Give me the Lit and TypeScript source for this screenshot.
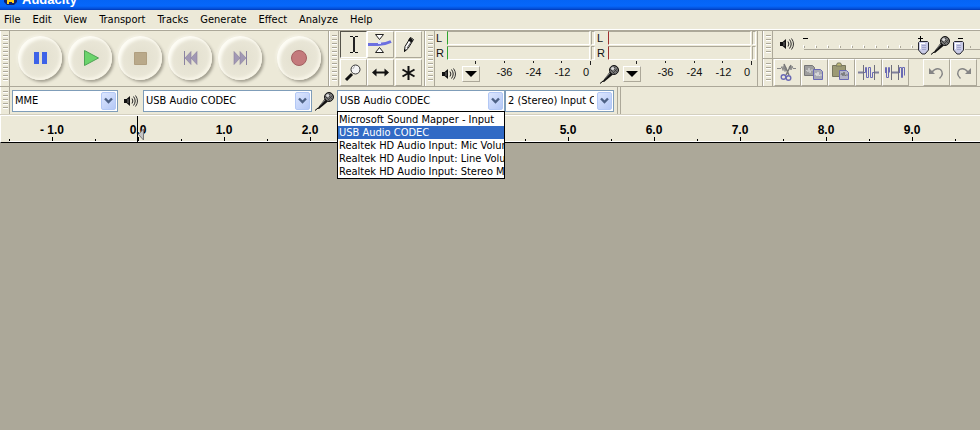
import { LitElement, html, css, svg, nothing } from "lit";
import { customElement, property } from "lit/decorators.js";
import { classMap } from "lit/directives/class-map.js";

const speaker = html`<svg class="ico" width="14" height="12" viewBox="0 0 14 12" aria-hidden="true">
  <path d="M0 4h2.500L6 1v10L2.500 8H0z" fill="#111" /><path d="M4 4v4" stroke="#777" />
  <path d="M8 3.500q1.800 2.500 0 5M9.500 1.500q3.400 4.500 0 9" fill="none" stroke="#222" />
  <path d="M11.500.5q4 5.500 0 11" fill="none" stroke="#333" />
</svg>`;

const mic = html`<svg class="ico" width="20" height="20" viewBox="0 0 20 20" aria-hidden="true">
  <path d="M0 19.500L3 17" stroke="#000" />
  <path d="M2.500 17.500L10 7.500l3 3-9 7.500z" fill="#111" />
  <path d="M5 14.500L10.500 8.500" stroke="#888" stroke-width="1" />
  <circle cx="14" cy="6" r="4.500" fill="#777" stroke="#111" />
  <path d="M10 5l5 5M12 3l5 5M11 7l5-5M13 9l5-5" stroke="#333" stroke-width=".7" />
  <circle cx="12.700" cy="4.500" r="1.500" fill="#ddd" />
</svg>`;

const thumb = html`<svg class="thumb" width="12" height="14" viewBox="0 0 12 14" aria-hidden="true">
  <path d="M1.500 .5h8l1 1v7.500l-3.500 4h-3l-3.500-4v-7.500z" fill="#c8cae6" stroke="#26262e" />
  <path d="M2 2h5v1H3v5H2z" fill="#fff" />
  <path d="M4 4.500h4M4 6.500h4M4 8.500h4" stroke="#a2a5cb" />
</svg>`;

const transport: Record<string, unknown> = {
  Pause: svg`<path d="M8 8h5v12H8zM16 8h5v12h-5z" fill="#3d62e8" />`,
  Play: svg`<path d="M8.500 6.500v15L22.500 14z" fill="#6bd46b" stroke="#4fa455" />`,
  Stop: svg`<path d="M8.500 8.500h12v12h-12z" fill="#b9a98a" stroke="#b09f80" />`,
  "Skip to Start": svg`<path d="M8.500 7v14" stroke="#8a82a0" /><path d="M15 7.500v13L9 14zM21 7.500v13L15 14z" fill="#a198b4" stroke="#8a82a0" stroke-width=".6" />`,
  "Skip to End": svg`<path d="M20.500 7v14" stroke="#8a82a0" /><path d="M8 7.500v13l6-6.500zM14 7.500v13l6-6.500z" fill="#a198b4" stroke="#8a82a0" stroke-width=".6" />`,
  Record: svg`<circle cx="14" cy="14" r="7.500" fill="#c47a7c" stroke="#a35f61" />`,
};

const tools: Array<[string, unknown]> = [
  ["Selection Tool", svg`<path d="M10 5.500h3M15 5.500h3M10 21.500h3M15 21.500h3M13 6.500h2M13 20.500h2" stroke="#111" /><path d="M14 6v15" stroke="#222" stroke-width="2" />`],
  ["Envelope Tool", svg`<path d="M1 13.500h10q7 0 13-3" fill="none" stroke="#6b6fe0" stroke-width="3" />
    <path d="M8.500 3.500h8l-4 5zM8.500 21.500h8l-4-5z" fill="#fff" stroke="#222" /><path d="M11 10h3v3h-3z" fill="#dfe2ff" />`],
  ["Draw Tool", svg`<path d="M9.500 20.500l.5-5 5.500-9 3 2-5.500 9z" fill="#fff" stroke="#111" /><path d="M15 6.500l3 2.500-1.500 2.500-3.500-2zM9 21v-3l2.500 1z" fill="#111" /><path d="M12 17l4-6" stroke="#555" />`],
  ["Zoom Tool", svg`<path d="M6 21l6-6" stroke="#111" stroke-width="3" /><circle cx="15.500" cy="10.500" r="4.500" fill="#f4f4f4" stroke="#333" /><path d="M13 10q0-2 2-2.500" fill="none" stroke="#aaa" />`],
  ["Time Shift Tool", svg`<path d="M8 13.500h11" stroke="#111" stroke-width="2" /><path d="M5 13.500l4.500-4v8zM22 13.500l-4.500-4v8z" fill="#111" />`],
  ["Multi-Tool Mode", svg`<path d="M13.500 7v14M7.500 10.500l12 7M19.500 10.500l-12 7" stroke="#111" stroke-width="2" />`],
];

const edits: Array<[string, unknown]> = [
  ["Cut", svg`<path d="M3 9.500h4l1-2 1 4 1-5 1 6 1-4M15 9l1-2 1 4 1-4 1 2.500h3" fill="none" stroke="#888" />
    <path d="M10 5l5 11M17 6l-5 10" stroke="#777" stroke-width="1.500" /><circle cx="9.500" cy="18" r="2.300" fill="none" stroke="#6a6ab4" stroke-width="1.400" /><circle cx="14.500" cy="19" r="2.300" fill="none" stroke="#6a6ab4" stroke-width="1.400" />`],
  ["Copy", svg`<path d="M3.500 6.500h8l2 2v8h-10z" fill="#9e9e9e" stroke="#777" /><path d="M5 12l1-1 1 2 1-4 1 5 1-3h2" fill="none" stroke="#ccc" />
    <path d="M12.500 10.500h7l2 2v8h-9z" fill="#a9aab4" stroke="#6a6ab4" /><path d="M14 16l1-2 1 3 1-4 1 4 1-1h2" fill="none" stroke="#ddd" />`],
  ["Paste", svg`<path d="M4.500 6.500h13v11h-13z" fill="#9c9a74" stroke="#77765e" /><path d="M8 7l1.500-3h3L14 7z" fill="#c4be77" stroke="#77765e" />
    <path d="M11.500 11.500h7l2 2v7h-9z" fill="#b4b4c4" stroke="#6a6ab4" /><path d="M13 16l1-2 1 3 1-4 1 4 1-1h2" fill="none" stroke="#777" />`],
  ["Trim", svg`<path d="M3 13.500h5M20 13.500h4" stroke="#7f7f9c" stroke-width="2" />
    <path d="M9 13.500h1.500v-5h1v10h2v-10h2v10h2v-5h1.500" fill="none" stroke="#6a6ab4" /><path d="M8.500 6v15M19.500 6v15" stroke="#6f6f7c" />`],
  ["Silence", svg`<path d="M3.500 14v-5.500h1v10h2v-10h1v5M17.500 14v-5.500h2v10h1v-10h2v8" fill="none" stroke="#6a6ab4" />
    <path d="M9.500 6v15M16.500 6v15" stroke="#6f6f7c" /><path d="M10 13.500h6" stroke="#7f7f9c" stroke-width="2" />`],
  ["Undo", svg`<path d="M9 13q4-5 8.500-2.500 4 4-1 9" fill="none" stroke="#858585" stroke-width="1.400" /><path d="M6 9v6h6z" fill="#858585" />`],
  ["Redo", svg`<path d="M18 13q-4-5-8.500-2.500-4 4 1 9" fill="none" stroke="#858585" stroke-width="1.400" /><path d="M21 9v6h-6z" fill="#858585" />`],
];

@customElement("tool-grip")
export class ToolGrip extends LitElement {
  static styles = css`
    :host { display: flex; flex: none; width: 10px; box-sizing: border-box; justify-content: center; padding: 4px 0;
      border-left: 1px solid #fff; border-right: 1px solid #aca899; }
    .lines { width: 5px; background: repeating-linear-gradient(#aca899 0 1px, #fff 1px 2px, transparent 2px 4px); }
  `;
  render() {
    return html`<span class="lines"></span>`;
  }
}

@customElement("level-meter")
export class LevelMeter extends LitElement {
  @property() kind = "output";

  static styles = css`
    :host { display: block; flex: none; width: 159px; font: 11px/12px "Liberation Sans", Arial, sans-serif; color: #111; }
    .channel { display: flex; height: 15px; align-items: flex-start; gap: 1px; }
    .name { width: 10px; line-height: 15px; }
    .bar { box-sizing: border-box; height: 14px; width: 144px; border: 1px solid #fff; border-top-color: #aca899; border-left: 1px solid #2fa52f; }
    .input .bar { border-left-color: #a03030; }
    .clip { box-sizing: border-box; height: 14px; width: 4px; border: 1px solid #fff; border-top-color: #aca899; border-left-color: #aca899; }
    .ticks { display: block; margin-left: 10px; }
    .bottom { display: flex; align-items: center; height: 17px; }
    .icon { flex: none; width: 26px; display: flex; justify-content: center; }
    .pick { flex: none; box-sizing: border-box; width: 18px; height: 16px; padding: 0; border: 1px solid #fff; border-right-color: #aca899; border-bottom-color: #aca899;
      background: #ece9d8; display: flex; align-items: center; justify-content: center; }
    .scale { flex: none; display: flex; margin: 0 0 4px 10px; }
    .scale span { width: 29px; text-align: center; }
    .scale .zero { width: 18px; }
    svg { display: block; }
  `;

  render() {
    const bar = (name: string) => html`<div class="channel"><span class="name">${name}</span><span class="bar"></span><span class="clip"></span></div>`;
    return html`<div class=${this.kind}>
      ${bar("L")}${bar("R")}
      <svg class="ticks" width="146" height="4" aria-hidden="true"><path d="M29.500 0v3M58.500 0v2M87.500 0v2M115.500 0v2M144.500 0v4" stroke="#222" /></svg>
      <div class="bottom">
        <span class="icon">${this.kind === "input" ? mic : speaker}</span>
        <button class="pick" aria-label="${this.kind} meter menu"><svg width="12" height="6"><path d="M0 0h12L6 6z" fill="#000" /></svg></button>
        <div class="scale"><span>-36</span><span>-24</span><span>-12</span><span class="zero">0</span></div>
      </div>
    </div>`;
  }
}

@customElement("combo-box")
export class ComboBox extends LitElement {
  @property() label = "";
  @property() value = "";
  @property({ attribute: false }) options: string[] = [];

  static styles = css`
    :host { display: block; flex: none; position: relative; height: 22px; box-sizing: border-box; }
    select { appearance: none; box-sizing: border-box; width: 100%; height: 100%; margin: 0; padding: 0 19px 0 2px; border: 1px solid #7f9db9; border-radius: 0;
      background: #fff; color: #000; font: inherit; text-overflow: clip; outline: none; }
    .arrow { position: absolute; top: 2px; right: 2px; width: 15px; height: 18px; box-sizing: border-box; display: flex; align-items: center; justify-content: center;
      border: 1px solid #b3c8f5; border-radius: 2px; background: linear-gradient(135deg, #dce6fe, #b4c8f6); pointer-events: none; }
    .list { position: absolute; z-index: 2; top: 100%; left: 0; right: 0; margin: -1px 0 0; padding: 1px 0 0; list-style: none; background: #fff; border: 1px solid #000; overflow: hidden; }
    .item { height: 13px; line-height: 13px; padding-left: 1px; white-space: nowrap; }
    .on { background: #316ac5; color: #fff; }
  `;

  render() {
    return html`<select aria-label=${this.label}><option>${this.value}</option></select>
      <span class="arrow"><svg width="9" height="7"><path d="M1 1.500l3.500 3.500L8 1.500" fill="none" stroke="#4d6185" stroke-width="2.400" /></svg></span>
      ${this.options.length
        ? html`<ul class="list" role="listbox" aria-label=${this.label}>
            ${this.options.map((o) => html`<li role="option" aria-selected=${o === this.value} class=${classMap({ item: true, on: o === this.value })}>${o}</li>`)}
          </ul>`
        : nothing}`;
  }
}

@customElement("app-root")
export class AppRoot extends LitElement {
  static styles = css`
    :host { display: flex; flex-direction: column; min-height: 100vh; overflow: hidden; background: #aca899; color: #000;
      font: 11px/14px "DejaVu Sans Condensed", "Noto Sans", sans-serif; }
    button { font: inherit; color: inherit; }
    .title { flex: none; display: flex; align-items: flex-end; gap: 5px; height: 10px; padding-left: 4px; box-sizing: border-box; overflow: hidden;
      background: linear-gradient(#0564f5, #0667fb 60%, #0450d8 85%, #0138b8); }
    .title svg { align-self: flex-start; }
    .caption { margin-bottom: 2px; font: bold 13px/16px "Liberation Sans", Arial, sans-serif; color: #fff; }
    .menu { flex: none; display: flex; height: 19px; align-items: center; background: #ece9d8; }
    .menu button { border: 0; padding: 0 8px 0 4px; background: none; }
    .dock { background: #ece9d8; flex: none; }
    .row { display: flex; height: 58px; box-sizing: border-box; border-top: 1px solid #fff; border-bottom: 1px solid #aca899; box-shadow: inset 0 1px #aca899; padding-top: 1px; }
    .panel { display: flex; flex: none; box-sizing: border-box; border-right: 1px solid #aca899; }
    .transport { display: flex; align-items: center; gap: 6px; width: 318px; padding: 0 0 1px 8px; box-sizing: border-box; }
    .round { width: 44px; height: 44px; flex: none; padding: 0; border: 0; border-radius: 50%; display: flex; align-items: center; justify-content: center;
      background: radial-gradient(circle at 50% 50%, #e2dfce, #eae7d8 68%);
      box-shadow: inset 3px 3px 3px #fdfcf4, inset -2px -2px 3px #f8f5e8, 2px 2px 3px #a29f90, -1px -1px 3px #f6f4e8; }
    .record { margin-left: 9px; }
    .tools { display: grid; grid-template-columns: 27px 28px 28px; grid-auto-rows: 28px; padding-left: 1px; width: 85px; box-sizing: border-box; }
    .tool { width: 27px; height: 27px; padding: 0; box-sizing: border-box; background: #ece9d8; border: 1px solid #fff; border-right-color: #aca899; border-bottom-color: #aca899; overflow: hidden; }
    .tool svg { display: block; margin: -1px; }
    .pressed { border-color: #55534a #fff #fff #55534a; }
    .meters { display: flex; gap: 2px; padding: 0 1px 0 1px; }
    .right { flex: 1; margin-left: 4px; border-left: 1px solid #aca899; display: flex; flex-direction: column; min-width: 0; }
    .mixer, .edit { display: flex; min-width: 0; box-sizing: border-box; }
    .mixer { height: 28px; border-bottom: 1px solid #aca899; }
    .edit { height: 27px; }
    .sliders { flex: 1; min-width: 0; display: flex; padding: 0 0 0 7px; overflow: hidden; }
    .speaker { flex: none; box-sizing: border-box; padding-top: 7px; width: 23px; }
    .mic { flex: none; box-sizing: border-box; padding: 4px 0 0 1px; width: 22px; }
    .ico { display: block; }
    .slider { position: relative; flex: none; width: 127px; height: 27px; }
    .slider svg { display: block; position: absolute; left: 0; top: 0; }
    .slider input { position: absolute; inset: 0; width: 100%; height: 100%; margin: 0; opacity: 0; }
    .slider .thumb { top: 10px; left: 115px; }
    .slider:first-of-type { margin-right: -12px; width: 139px; }
    .sliders > .slider { width: 127px; margin-right: 0; }
    .second .thumb { left: 1px; }
    .buttons { display: flex; padding-left: 1px; }
    .undo { margin-left: 14px; }
    .devices { display: flex; align-items: center; height: 28px; box-sizing: border-box; border-bottom: 1px solid #d4d0c0; }
    .devices tool-grip { height: 27px; }
    .api { width: 106px; margin-left: 2px; }
    .gap { width: 25px; display: flex; justify-content: center; align-items: center; }
    .out { width: 169px; }
    .in { width: 168px; }
    .chan { width: 109px; }
    .end { width: 4px; height: 27px; box-sizing: border-box; margin-left: 3px; border: solid #aca899; border-width: 0 1px; }
    .ruler { position: relative; flex: none; display: flex; height: 28px; box-sizing: border-box; padding-left: 8px; overflow: hidden; background: #ece9d8;
      border-top: 1px solid #fff; border-left: 1px solid #fff; border-bottom: 1px solid #000; }
    .cell { flex: none; width: 86px; display: flex; flex-direction: column; align-items: center; font: bold 12px/14px "Liberation Sans", Arial, sans-serif; padding-top: 7px; box-sizing: border-box; border-bottom: 1px solid #fff; }
    .cell svg { display: block; }
    .head { position: absolute; left: 136px; top: 0; }
    .tracks { flex: 1; }
  `;

  private tool([name, art]: [string, unknown], extra = "") {
    return html`<button class="tool ${extra}" aria-label=${name}><svg width="27" height="27" viewBox="0 0 27 27">${art}</svg></button>`;
  }

  private slider(name: string, second: boolean) {
    const xs = Array.from({ length: 10 }, (_, i) => i * 12);
    return html`<label class="slider ${second ? "second" : ""}">
      <input type="range" aria-label=${name} />
      <svg width="127" height="27" aria-hidden="true">
        ${second
          ? svg`<path d="M6 7.500h5" stroke="#000" /><path d="M13 18.500h114" stroke="#aca899" /><path d="M18.500 15v2M30.500 15v2" stroke="#aca899" />`
          : svg`<path d="M0 7.500h5M115 7.500h5M117.500 5v5" stroke="#000" /><path d="M1 18.500h114" stroke="#aca899" />
              ${xs.map((x) => svg`<path d="M${x + 1}.500 15v2" stroke="#aca899" /><path d="M${x}.500 14v3" stroke="#fff" />`)}`}
      </svg>
      ${thumb}
    </label>`;
  }

  render() {
    const menus = ["File", "Edit", "View", "Transport", "Tracks", "Generate", "Effect", "Analyze", "Help"];
    const marks = ["- 1.0", "0.0", "1.0", "2.0", "3.0", "4.0", "5.0", "6.0", "7.0", "8.0", "9.0", "10.0"];
    return html`
      <header class="title">
        <svg width="13" height="5"><path d="M0 0h13v2l-3 3H3L0 2z" fill="#10206a" /><path d="M3 0h7v3H8V2H5v2H3z" fill="#ffd21c" /></svg>
        <span class="caption">Audacity</span>
      </header>
      <nav class="menu">${menus.map((m) => html`<button>${m}</button>`)}</nav>
      <div class="dock">
        <div class="row">
          <div class="panel"><tool-grip></tool-grip>
            <div class="transport">${Object.entries(transport).map(
              ([name, art]) => html`<button class="round ${name === "Record" ? "record" : ""}" aria-label=${name}><svg width="28" height="28" viewBox="0 0 28 28">${art}</svg></button>`
            )}</div>
          </div>
          <div class="panel"><tool-grip></tool-grip>
            <div class="tools">${tools.map((t, i) => this.tool(t, i === 0 ? "pressed" : ""))}</div>
          </div>
          <div class="panel"><tool-grip></tool-grip>
            <div class="meters"><level-meter kind="output"></level-meter><level-meter kind="input"></level-meter></div>
          </div>
          <div class="right">
            <div class="mixer"><tool-grip></tool-grip>
              <div class="sliders">
                <span class="speaker">${speaker}</span>${this.slider("Output volume", false)}
                <span class="mic">${mic}</span>${this.slider("Input volume", true)}
              </div>
            </div>
            <div class="edit"><tool-grip></tool-grip>
              <div class="buttons">${edits.map((t) => this.tool(t, t[0] === "Undo" ? "undo" : ""))}</div>
            </div>
          </div>
        </div>
        <div class="devices"><tool-grip></tool-grip>
          <combo-box class="api" label="Audio host" value="MME"></combo-box>
          <span class="gap">${speaker}</span>
          <combo-box class="out" label="Output device" value="USB Audio CODEC"></combo-box>
          <span class="gap">${mic}</span>
          <combo-box class="in" label="Input device" value="USB Audio CODEC" .options=${[
            "Microsoft Sound Mapper - Input",
            "USB Audio CODEC",
            "Realtek HD Audio Input: Mic Volume",
            "Realtek HD Audio Input: Line Volume",
            "Realtek HD Audio Input: Stereo Mix",
          ]}></combo-box>
          <combo-box class="chan" label="Input channels" value="2 (Stereo) Input Channels"></combo-box>
          <span class="end"></span>
        </div>
      </div>
      <div class="ruler">
        ${marks.map((m) => html`<div class="cell"><span>${m}</span><svg width="86" height="4"><path d="M.5 2v2M43.500 0v4" stroke="#000" /></svg></div>`)}
        <svg class="head" width="8" height="26"><path d="M.5 0v26" stroke="#000" /><path d="M1.500 18.500l5-5.500v11z" fill="#c4c4c4" stroke="#777" /></svg>
      </div>
      <main class="tracks"></main>
    `;
  }
}
